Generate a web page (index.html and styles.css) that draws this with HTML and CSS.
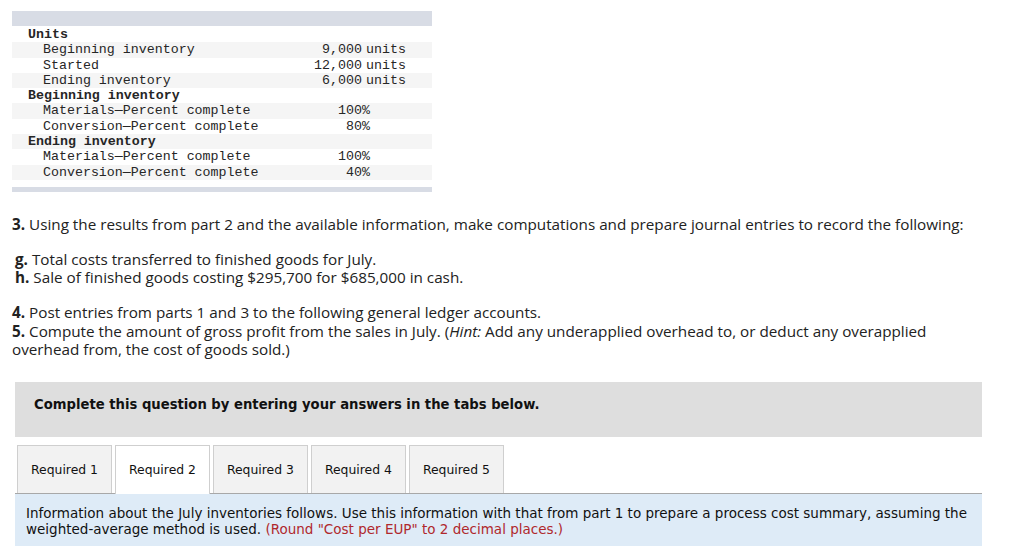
FILE: index.html
```html
<!DOCTYPE html>
<html>
<head>
<meta charset="utf-8">
<link rel="stylesheet" href="styles.css">
</head>
<body>
<div class="page">
  <div class="data">
    <div class="data-head"></div>
    <div class="row"><span class="lbl hdr">Units</span></div>
    <div class="row alt"><span class="lbl sub">Beginning inventory</span><span class="num">9,000</span><span class="suf units">units</span></div>
    <div class="row"><span class="lbl sub">Started</span><span class="num">12,000</span><span class="suf units">units</span></div>
    <div class="row alt"><span class="lbl sub">Ending inventory</span><span class="num">6,000</span><span class="suf units">units</span></div>
    <div class="row"><span class="lbl hdr">Beginning inventory</span></div>
    <div class="row alt"><span class="lbl sub">Materials—Percent complete</span><span class="num">100</span><span class="suf">%</span></div>
    <div class="row"><span class="lbl sub">Conversion—Percent complete</span><span class="num">80</span><span class="suf">%</span></div>
    <div class="row alt"><span class="lbl hdr">Ending inventory</span></div>
    <div class="row"><span class="lbl sub">Materials—Percent complete</span><span class="num">100</span><span class="suf">%</span></div>
    <div class="row alt"><span class="lbl sub">Conversion—Percent complete</span><span class="num">40</span><span class="suf">%</span></div>
    <div class="data-foot"></div>
  </div>

  <div class="question">
    <p class="para"><b>3.</b> Using the results from part 2 and the available information, make computations and prepare journal entries to record the following:</p>
    <p class="para items"><b>g.</b> Total costs transferred to finished goods for July.<br><b>h.</b> Sale of finished goods costing $295,700 for $685,000 in cash.</p>
    <p class="para"><b>4.</b> Post entries from parts 1 and 3 to the following general ledger accounts.<br><b>5.</b> Compute the amount of gross profit from the sales in July. (<i>Hint:</i> Add any underapplied overhead to, or deduct any overapplied overhead from, the cost of goods sold.)</p>
  </div>

  <div class="prompt">Complete this question by entering your answers in the tabs below.</div>

  <div class="tabs">
    <div class="tab">Required 1</div>
    <div class="tab active">Required 2</div>
    <div class="tab">Required 3</div>
    <div class="tab">Required 4</div>
    <div class="tab">Required 5</div>
  </div>
  <div class="info">Information about the July inventories follows. Use this information with that from part 1 to prepare a process cost summary, assuming the weighted-average method is used. <span class="red">(Round "Cost per EUP" to 2 decimal places.)</span></div>
</div>
</body>
</html>
```

FILE: styles.css
```css
html, body {
  margin: 0;
  padding: 0;
  background: #fff;
}
.page {
  padding: 11px 0 0 0;
}
.data {
  margin-left: 12px;
  width: 420px;
  font-family: "Liberation Mono", "DejaVu Sans Mono", monospace;
  font-size: 13.3px;
  color: #262626;
}
.data-head {
  height: 15px;
  background: #d8dce5;
  margin-bottom: 1px;
}
.row {
  display: flex;
  height: 15.3px;
  line-height: 15.3px;
  white-space: nowrap;
}
.row.alt {
  background: #f5f5f5;
}
.lbl.hdr {
  padding-left: 16px;
  width: 264px;
  font-weight: bold;
}
.lbl.sub {
  padding-left: 31px;
  width: 265px;
}
.num {
  width: 54px;
  text-align: right;
}
.suf.units {
  padding-left: 4px;
}
.data-foot {
  height: 5px;
  background: #d8dce5;
  margin-top: 7px;
}
.question {
  width: 975px;
  padding: 0 12px;
  margin-top: 23px;
  font-family: "Open Sans", "Lato", sans-serif;
  font-size: 15.25px;
  line-height: 18.7px;
  color: #222;
}
.para {
  margin: 0 0 16px 0;
}
.items {
  padding-left: 3px;
}
.prompt {
  margin: 23px 0 0 15px;
  width: 948px;
  height: 55px;
  padding-left: 19px;
  background: #dedede;
  font-family: "DejaVu Sans", Verdana, sans-serif;
  font-weight: bold;
  font-size: 13.2px;
  line-height: 46px;
  color: #111;
}
.tabs {
  display: flex;
  gap: 3px;
  margin: 8px 0 0 17px;
  position: relative;
  z-index: 1;
}
.tab {
  height: 47px;
  line-height: 47px;
  padding: 0 13px;
  border: 1px solid #cfcfcf;
  border-bottom: none;
  background: #f2f2f2;
  font-family: "DejaVu Sans", Verdana, sans-serif;
  font-size: 12.4px;
  color: #111;
}
.tab.active {
  background: #fff;
  height: 48px;
  margin-bottom: -1px;
}
.info {
  margin-left: 15px;
  width: 956px;
  padding: 11px 0 9px 11px;
  border-top: 1px solid #a8a8a8;
  background: #deebf7;
  font-family: "DejaVu Sans", Verdana, sans-serif;
  font-size: 13.5px;
  line-height: 16px;
  color: #111;
}
.red {
  color: #b0282c;
}
```
